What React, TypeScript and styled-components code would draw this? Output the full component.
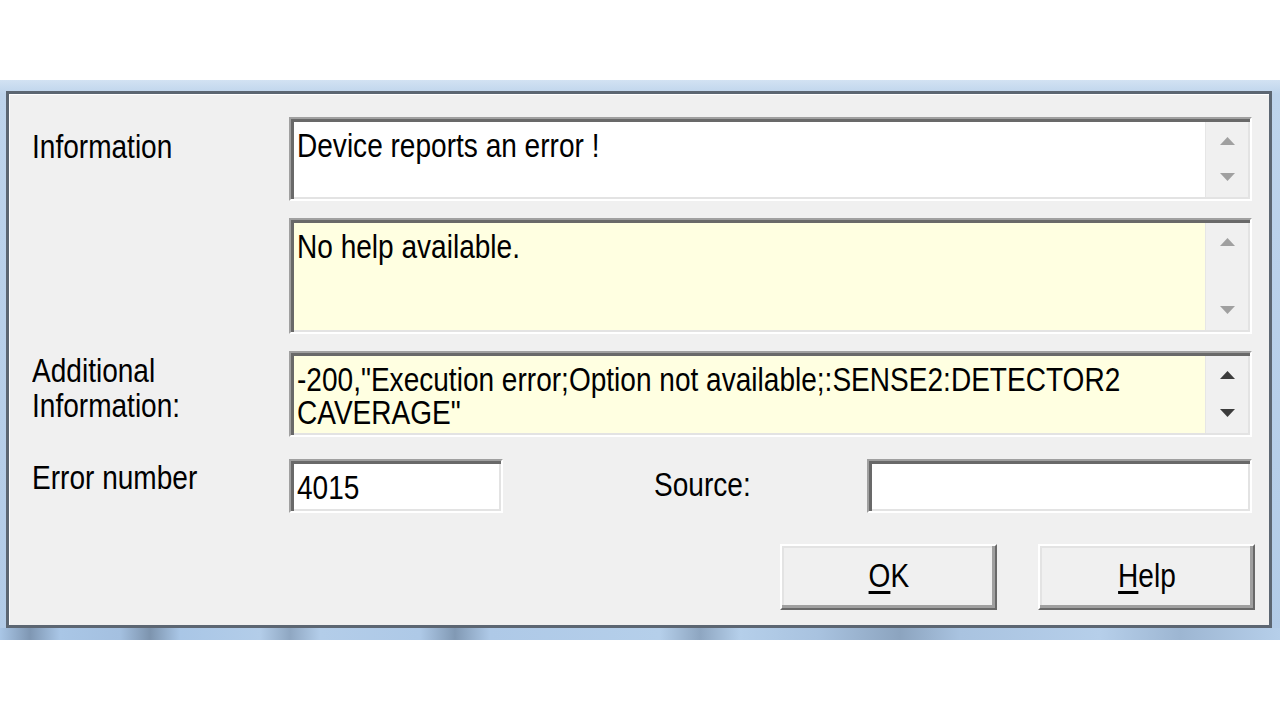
import React from "react";
import styled, { createGlobalStyle } from "styled-components";

const GlobalStyle = createGlobalStyle`
  html, body {
    margin: 0;
    padding: 0;
    background: #ffffff;
  }
  body {
    font-family: "Liberation Sans", Arial, sans-serif;
    color: #000000;
  }
`;

const FONT = `"Liberation Sans", Arial, sans-serif`;

const Page = styled.div`
  width: 1280px;
  height: 720px;
  padding-top: 80px;
  box-sizing: border-box;
`;

// the blurred aero frame behind the dialog
const WindowFrame = styled.div`
  height: 560px;
  box-sizing: border-box;
  padding: 11px 8px 12px 6px;
  background:
    linear-gradient(
        to right,
        #a9c6e6 0px,
        #7f97b3 30px,
        #a9c6e6 60px,
        #a4c0e0 120px,
        #7d94ae 150px,
        #a9c6e6 180px,
        #b3cde9 260px,
        #8fa7c2 290px,
        #b3cde9 320px,
        #aec9e7 420px,
        #8199b4 455px,
        #aec9e7 490px,
        #b5cfea 660px,
        #8ea6c1 700px,
        #b5cfea 740px,
        #a8c2df 820px,
        #8ca4bf 900px,
        #a9c3e0 960px,
        #b6cfea 1100px,
        #9db6d2 1180px,
        #b6cfea 1280px
      )
      bottom / 100% 12px no-repeat,
    linear-gradient(to bottom, #d2e2f3 0px, #bed4ec 14px, #b2cbe7 100%);
`;

const Dialog = styled.div`
  height: 100%;
  box-sizing: border-box;
  background: #f0f0f0;
  border: 3px solid #5c6672;
  box-shadow: inset 1px 1px 0 #ffffff;
  padding: 23px 17px 15px 23px;
  display: flex;
  flex-direction: column;
  font-family: ${FONT};
  font-size: 33px;
`;

// the dialog font is a narrow bitmap face; squeeze Liberation Sans to its width
const Narrow = styled.span<{ $origin?: string }>`
  display: inline-block;
  white-space: pre;
  transform: scaleX(0.85);
  transform-origin: ${(p) => p.$origin || "left"} center;
`;

const FieldGrid = styled.div`
  display: grid;
  grid-template-columns: 257px minmax(0, 1fr);
  row-gap: 17px;
`;

const Label = styled.div<{ $top: number }>`
  line-height: 35px;
  padding-top: ${(p) => p.$top}px;
`;

const Sunken = styled.div<{ $bg: string; $h: number }>`
  height: ${(p) => p.$h}px;
  min-width: 0;
  box-sizing: border-box;
  background: ${(p) => p.$bg};
  border-style: solid;
  border-width: 2px;
  border-color: #a0a0a0 #ffffff #ffffff #a0a0a0;
  box-shadow: inset 3px 3px 0 #696969, inset -2px -2px 0 #e3e3e3;
  display: flex;
`;

const BoxText = styled.div`
  flex: 1;
  min-width: 0;
  overflow: hidden;
  padding: 10px 0 0 6px;
  line-height: 33px;
`;

const ScrollCol = styled.div`
  flex: none;
  width: 43px;
  margin: 3px 2px 2px 0;
  background: #f0f0f0;
  border-left: 1px solid #e6e6e6;
  display: flex;
  flex-direction: column;
  justify-content: space-between;
  align-items: center;
  padding: 15px 0 16px;
  box-sizing: border-box;
`;

const ArrowIcon = styled.svg<{ $on: boolean }>`
  width: 15px;
  height: 8px;
  fill: ${(p) => (p.$on ? "#3c3c3c" : "#a0a0a0")};
`;

const Arrow = ({ dir, on }: { dir: "up" | "down"; on: boolean }) => (
  <ArrowIcon $on={on} viewBox="0 0 15 8">
    {dir === "up" ? <polygon points="7.5,0 15,8 0,8" /> : <polygon points="0,0 15,0 7.5,8" />}
  </ArrowIcon>
);

const ScrollBox = ({
  h,
  bg,
  on,
  lines,
}: {
  h: number;
  bg: string;
  on: boolean;
  lines: string[];
}) => (
  <Sunken $h={h} $bg={bg}>
    <BoxText>
      {lines.map((l) => (
        <div key={l}>
          <Narrow>{l}</Narrow>
        </div>
      ))}
    </BoxText>
    <ScrollCol>
      <Arrow dir="up" on={on} />
      <Arrow dir="down" on={on} />
    </ScrollCol>
  </Sunken>
);

const InputRow = styled.div`
  display: flex;
  align-items: flex-start;
  margin-top: 22px;
`;

const InputLabel = styled.div<{ $w: number; $top: number; $left?: number }>`
  width: ${(p) => p.$w}px;
  flex: none;
  box-sizing: border-box;
  padding-top: ${(p) => p.$top}px;
  padding-left: ${(p) => p.$left || 0}px;
  line-height: 34px;
`;

const Field = styled(Sunken)<{ $w?: number }>`
  ${(p) => (p.$w ? `width: ${p.$w}px; flex: none;` : "flex: 1;")}
  align-items: center;
  padding: 4px 0 0 6px;
`;

const ButtonRow = styled.div`
  display: flex;
  justify-content: flex-end;
  gap: 41px;
  margin-top: 31px;
  margin-right: -3px;
`;

const Button = styled.button`
  width: 217px;
  height: 66px;
  box-sizing: border-box;
  background: #f0f0f0;
  font-family: ${FONT};
  font-size: 33px;
  color: #000;
  border-style: solid;
  border-width: 2px;
  border-color: #ffffff #696969 #696969 #ffffff;
  box-shadow: inset -3px -3px 0 #a0a0a0, inset 2px 2px 0 #e3e3e3;
  padding: 0 0 2px 0;
  u {
    text-decoration-thickness: 3px;
    text-underline-offset: 4px;
  }
`;

export default function App() {
  return (
    <>
      <GlobalStyle />
      <Page>
        <WindowFrame>
          <Dialog>
            <FieldGrid>
              <Label $top={12}>
                <Narrow>Information</Narrow>
              </Label>
              <ScrollBox h={84} bg="#ffffff" on={false} lines={["Device reports an error !"]} />

              <div />
              <ScrollBox h={116} bg="#ffffe1" on={false} lines={["No help available."]} />

              <Label $top={2}>
                <div>
                  <Narrow>Additional</Narrow>
                </div>
                <div>
                  <Narrow>Information:</Narrow>
                </div>
              </Label>
              <ScrollBox
                h={86}
                bg="#ffffe1"
                on={true}
                lines={['-200,"Execution error;Option not available;:SENSE2:DETECTOR2', 'CAVERAGE"']}
              />
            </FieldGrid>

            <InputRow>
              <InputLabel $w={257} $top={2}>
                <Narrow>Error number</Narrow>
              </InputLabel>
              <Field $h={54} $bg="#ffffff" $w={214}>
                <Narrow>4015</Narrow>
              </Field>
              <InputLabel $w={364} $top={9} $left={151}>
                <Narrow>Source:</Narrow>
              </InputLabel>
              <Field $h={54} $bg="#ffffff" />
            </InputRow>

            <ButtonRow>
              <Button>
                <Narrow $origin="center">
                  <u>O</u>K
                </Narrow>
              </Button>
              <Button>
                <Narrow $origin="center">
                  <u>H</u>elp
                </Narrow>
              </Button>
            </ButtonRow>
          </Dialog>
        </WindowFrame>
      </Page>
    </>
  );
}
